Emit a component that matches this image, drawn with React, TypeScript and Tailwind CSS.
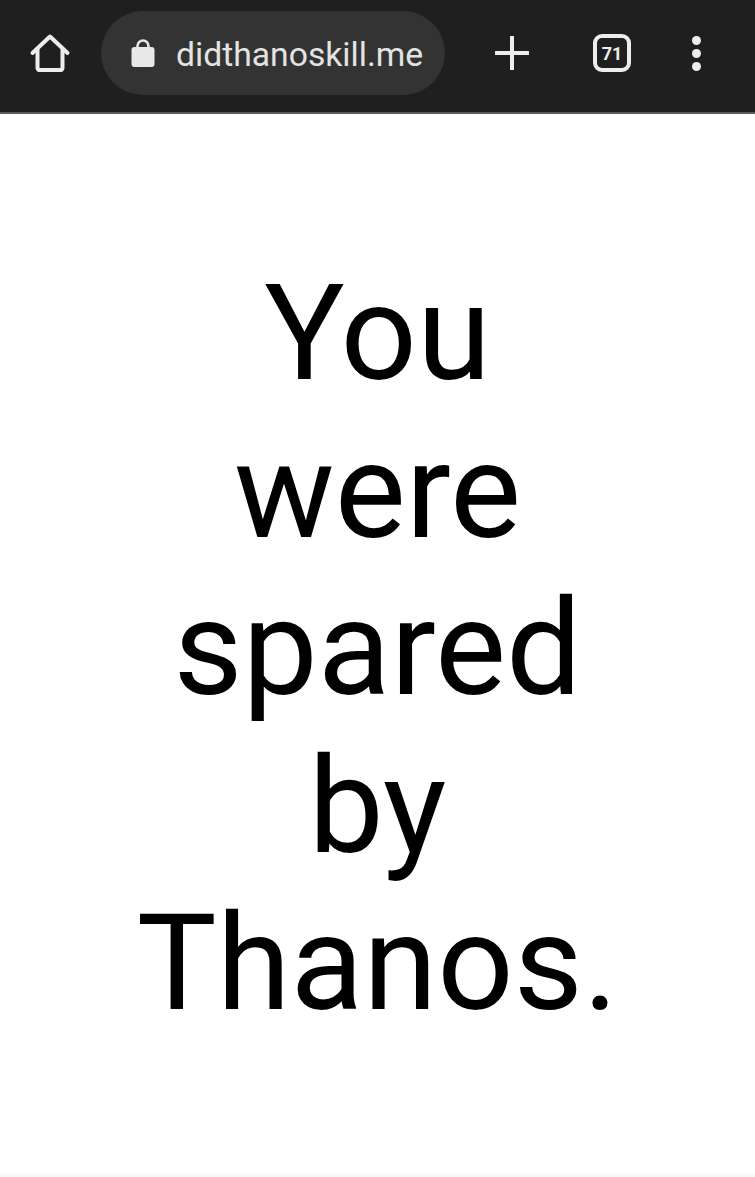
function HomeIcon() {
  return (
    <svg width="42" height="42" viewBox="0 0 42 42" fill="none" stroke="#ededed" strokeWidth="4" strokeLinecap="round" strokeLinejoin="round">
      <path d="M3.5 21 21 4.5 38.5 21" />
      <path d="M8.5 17.5V36a2.5 2.5 0 0 0 2.5 2h20a2.5 2.5 0 0 0 2.5-2V17.5" />
    </svg>
  );
}

function LockIcon() {
  return (
    <svg width="24" height="30" viewBox="0 0 24 30" fill="none">
      <path d="M6.5 10V8a5.5 5.5 0 0 1 11 0v2" stroke="#e8e8e8" strokeWidth="2.6" />
      <rect x="0.5" y="9" width="23" height="20" rx="3" fill="#e8e8e8" />
    </svg>
  );
}

export default function App() {
  return (
    <div className="flex h-[1177px] w-[755px] flex-col overflow-hidden bg-white font-['Roboto',sans-serif]">
      <header className="flex h-[114px] shrink-0 items-center border-b-2 border-[#5a5a5a] bg-[#1f1f1f] pb-[6px] pl-[29px]">
        <HomeIcon />
        <div className="ml-[30px] flex h-[84px] w-[344px] items-center rounded-[42px] bg-[#333333] pl-[30px]">
          <LockIcon />
          <span className="ml-[21px] mt-[3px] text-[33.7px] leading-none text-[#e3e3e3]">didthanoskill.me</span>
        </div>
        <svg className="ml-[50px]" width="34" height="34" viewBox="0 0 34 34" fill="none" stroke="#ededed" strokeWidth="4" strokeLinecap="round">
          <path d="M17 1v32M1 17h32" />
        </svg>
        <div className="ml-[64px] flex h-[38px] w-[38px] items-center justify-center rounded-[9px] border-4 border-[#ededed] text-[18px] font-bold text-[#ededed]">
          71
        </div>
        <div className="ml-[61px] flex flex-col gap-[4px]">
          <span className="h-[9px] w-[9px] rounded-full bg-[#ededed]" />
          <span className="h-[9px] w-[9px] rounded-full bg-[#ededed]" />
          <span className="h-[9px] w-[9px] rounded-full bg-[#ededed]" />
        </div>
      </header>
      <main className="flex flex-1 flex-col items-center pt-[141px] text-center text-[134px] leading-[157.5px] text-black">
        <p>You</p>
        <p>were</p>
        <p>spared</p>
        <p>by</p>
        <p>Thanos.</p>
      </main>
      <div className="h-[4px] shrink-0 bg-[#f9f9f9]" />
    </div>
  );
}
